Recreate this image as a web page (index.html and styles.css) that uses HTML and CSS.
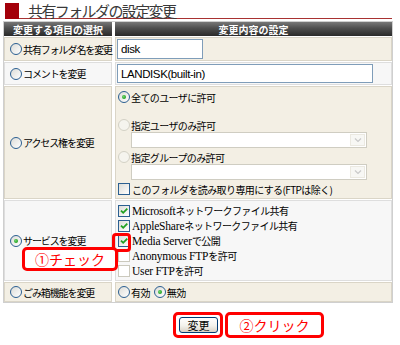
FILE: index.html
```html
<!DOCTYPE html>
<html lang="ja">
<head>
<meta charset="utf-8">
<title>共有フォルダの設定変更</title>
<link rel="stylesheet" href="styles.css">
</head>
<body>
<div class="page">
  <h1 class="title"><span class="mark"></span><span class="title-text">共有フォルダの設定変更</span></h1>

  <div class="form">
    <div class="hd">変更する項目の選択</div>
    <div class="hd">変更内容の設定</div>

    <div class="c lab"><span class="radio"></span>共有フォルダ名を変更</div>
    <div class="c val mid"><span class="input w1">disk</span></div>

    <div class="c alt lab"><span class="radio"></span>コメントを変更</div>
    <div class="c alt val mid"><span class="input w2">LANDISK(built-in)</span></div>

    <div class="c lab"><span class="radio"></span>アクセス権を変更</div>
    <div class="c val acc">
      <div class="line"><span class="radio on"></span>全てのユーザに許可</div>
      <div class="line"></div>
      <div class="line"><span class="radio dis"></span>指定ユーザのみ許可</div>
      <div class="sel"><span class="drop"><svg viewBox="0 0 8 6" width="8" height="6"><path d="M1 1.5 L4 4.5 L7 1.5" fill="none" stroke="#c9c9c9" stroke-width="1.2"/></svg></span></div>
      <div class="line"><span class="radio dis"></span>指定グループのみ許可</div>
      <div class="sel"><span class="drop"><svg viewBox="0 0 8 6" width="8" height="6"><path d="M1 1.5 L4 4.5 L7 1.5" fill="none" stroke="#c9c9c9" stroke-width="1.2"/></svg></span></div>
      <div class="line"><span class="cb"></span>このフォルダを読み取り専用にする(FTPは除く)</div>
    </div>

    <div class="c alt lab"><span class="radio on"></span>サービスを変更</div>
    <div class="c alt val svc">
      <div class="line"><span class="cb on"><svg viewBox="0 0 10 10" width="10" height="10"><path d="M2 4.6 L4.2 6.8 L8.3 2.6" fill="none" stroke="#21a121" stroke-width="1.8"/></svg></span><span class="lat">Microsoft</span>ネットワークファイル共有</div>
      <div class="line"><span class="cb on"><svg viewBox="0 0 10 10" width="10" height="10"><path d="M2 4.6 L4.2 6.8 L8.3 2.6" fill="none" stroke="#21a121" stroke-width="1.8"/></svg></span><span class="lat">AppleShare</span>ネットワークファイル共有</div>
      <div class="line"><span class="cb on"><svg viewBox="0 0 10 10" width="10" height="10"><path d="M2 4.6 L4.2 6.8 L8.3 2.6" fill="none" stroke="#21a121" stroke-width="1.8"/></svg></span><span class="lat">Media Server</span>で公開</div>
      <div class="line"><span class="cb dis"></span><span class="lat">Anonymous FTP</span>を許可</div>
      <div class="line"><span class="cb dis"></span><span class="lat">User FTP</span>を許可</div>
    </div>

    <div class="c lab"><span class="radio"></span>ごみ箱機能を変更</div>
    <div class="c val mid">
      <div class="line"><span class="radio"></span>有効<span class="radio on gap"></span>無効</div>
    </div>
  </div>

  <div class="actions">
    <div class="btnwrap">
      <button class="btn" type="button">変更</button>
      <span class="note click">②クリック</span>
    </div>
  </div>

  <span class="hl"></span>
  <span class="note check">①チェック</span>
</div>
</body>
</html>
```

FILE: styles.css
```css
body {
  margin: 0;
  background: #fff;
  color: #000;
  font-family: "Noto Sans CJK JP", sans-serif;
  font-size: 10px;
}

.page {
  position: relative;
  width: 400px;
  height: 345px;
  overflow: hidden;
}

.title {
  display: flex;
  margin: 3px 8px 0 5px;
  height: 16px;
  font-size: 15px;
  font-weight: normal;
}

.mark {
  flex: none;
  width: 14px;
  height: 16px;
  background: #a3000a;
}

.title-text {
  flex: 1;
  height: 15px;
  line-height: 15px;
  padding-left: 9px;
  border-bottom: 1px solid #a83232;
  color: #3a3a3a;
  letter-spacing: -1.6px;
  white-space: nowrap;
}

.form {
  display: grid;
  grid-template-columns: 108px 277px;
  grid-template-rows: 14px 24px 23px 113px 81px 20px;
  column-gap: 3px;
  row-gap: 1px;
  box-sizing: border-box;
  width: 390px;
  margin: 2px 0 0 3px;
  border: 1px solid #cfcfcf;
  background: #fff;
}

.hd {
  display: flex;
  align-items: center;
  justify-content: center;
  background: linear-gradient(#777, #4d4d4d 45%, #2a2a2a);
  color: #fff;
  font-size: 10px;
  font-weight: bold;
  white-space: nowrap;
}

.c {
  box-sizing: border-box;
  border: 1px solid #dad5c7;
  background: #f3efe4;
  white-space: nowrap;
}

.c.alt {
  border-color: #dedede;
  background: #f7f7f7;
}

.lab {
  display: flex;
  align-items: center;
  padding-left: 5px;
  letter-spacing: -1.1px;
}

.val {
  display: flex;
  flex-direction: column;
  padding-left: 2px;
  letter-spacing: -0.6px;
}

.val.mid {
  justify-content: center;
}

.acc {
  padding-top: 3px;
}

.svc {
  padding-top: 2px;
}

.lat {
  font-family: "Liberation Serif", serif;
  font-size: 11.5px;
  letter-spacing: -0.2px;
}

.line {
  display: flex;
  align-items: center;
  height: 14px;
}

.svc .line {
  height: 15px;
}

.input {
  box-sizing: border-box;
  display: flex;
  align-items: center;
  margin-left: -1px;
  padding-left: 3px;
  border: 1px solid #7f9db9;
  background: #fff;
  font-family: "Liberation Sans", sans-serif;
  font-size: 11.5px;
  letter-spacing: -0.4px;
}

.w1 {
  width: 86px;
  height: 20px;
}

.w2 {
  width: 256px;
  height: 19px;
}

.radio {
  flex: none;
  box-sizing: border-box;
  position: relative;
  width: 12px;
  height: 12px;
  margin-right: 1px;
  border: 1px solid #2b5f91;
  border-radius: 50%;
  background: linear-gradient(135deg, #dcdcd7, #fff);
}

.radio.on::after {
  content: "";
  position: absolute;
  left: 3px;
  top: 3px;
  width: 4px;
  height: 4px;
  border-radius: 50%;
  background: radial-gradient(circle at 40% 40%, #6fd56f, #21a121 70%);
}

.radio.dis {
  border-color: #d3d1c5;
  background: #f5f4ee;
}

.radio.gap {
  margin-left: 4px;
}

.cb {
  flex: none;
  box-sizing: border-box;
  display: flex;
  align-items: center;
  justify-content: center;
  width: 12px;
  height: 12px;
  margin-right: 2px;
  border: 1px solid #2b5f91;
  background: linear-gradient(135deg, #dcdcd7, #fff);
}

.cb.dis {
  border-color: #cbc9bd;
  background: #fff;
}

.sel {
  box-sizing: border-box;
  display: flex;
  justify-content: flex-end;
  align-items: stretch;
  width: 236px;
  height: 16px;
  margin: 0 0 2px 13px;
  padding: 1px;
  border: 1px solid #cfcdc2;
  background: #fff;
}

.drop {
  display: flex;
  align-items: center;
  justify-content: center;
  width: 13px;
  border: 1px solid #ebe9e1;
  background: #f7f7f4;
}

.actions {
  display: flex;
  justify-content: center;
  width: 390px;
  margin: 9px 0 0 3px;
}

.btnwrap {
  position: relative;
  display: flex;
  padding: 2px 2px 2px 3px;
  border: 3px solid #f00;
  border-radius: 5px;
}

.btn {
  box-sizing: border-box;
  width: 39px;
  height: 16px;
  padding: 0;
  border: 1px solid #003c74;
  border-radius: 3px;
  background: linear-gradient(#fff, #f3f2ec 55%, #d8d2c6);
  color: #000;
  font-family: "Noto Sans CJK JP", sans-serif;
  font-size: 11px;
  line-height: 14px;
}

.note {
  position: absolute;
  box-sizing: border-box;
  display: flex;
  align-items: center;
  justify-content: center;
  border: 3px solid #f00;
  border-radius: 5px;
  background: #fff;
  color: #f00;
  font-family: "Noto Sans CJK JP", sans-serif;
  font-size: 14px;
  white-space: nowrap;
}

.click {
  left: calc(100% + 5px);
  top: -3px;
  width: 99px;
  height: 26px;
}

.check {
  left: 22px;
  top: 247px;
  width: 96px;
  height: 24px;
}

.hl {
  position: absolute;
  left: 112px;
  top: 233px;
  box-sizing: border-box;
  width: 19px;
  height: 19px;
  border: 3px solid #f00;
  border-radius: 4px;
}
```
